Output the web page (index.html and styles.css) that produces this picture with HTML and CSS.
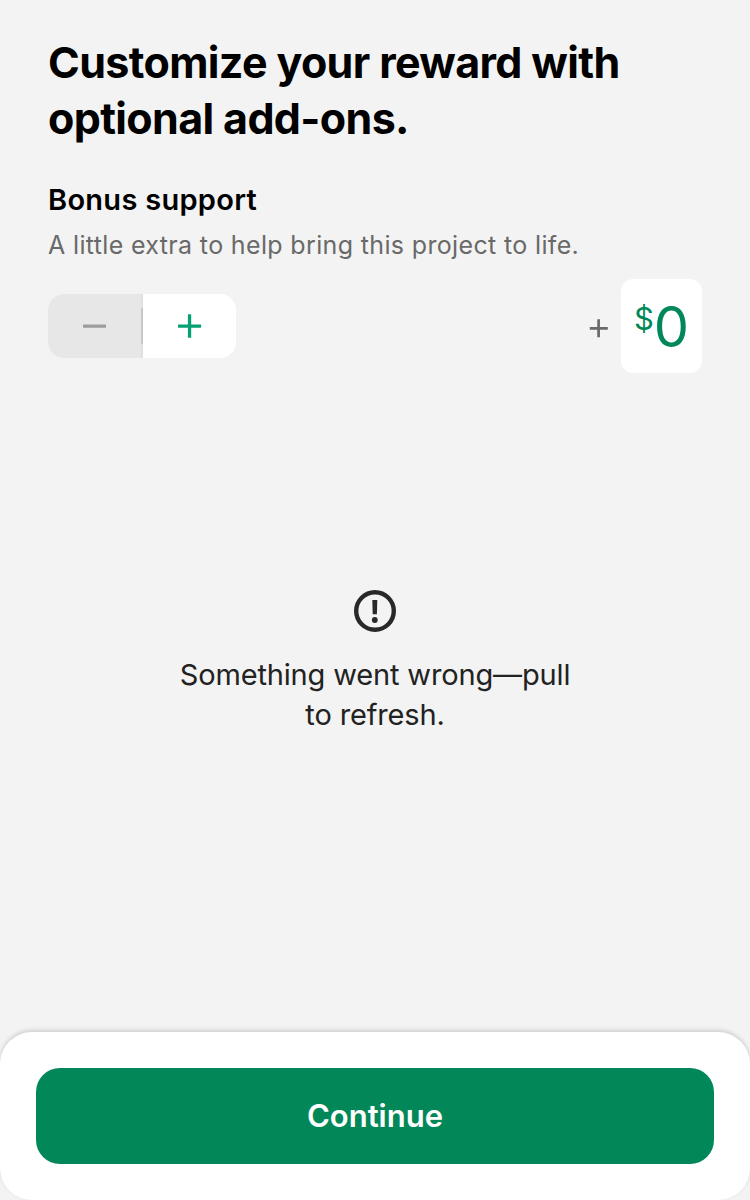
FILE: index.html
```html
<!DOCTYPE html>
<html lang="en">
<head>
<meta charset="utf-8">
<title>Add-ons</title>
<link rel="stylesheet" href="styles.css">
</head>
<body>
<div class="screen">
  <main class="content">
    <h1 class="title">Customize your reward with<br>optional add-ons.</h1>
    <h2 class="subtitle">Bonus support</h2>
    <p class="hint">A little extra to help bring this project to life.</p>
    <div class="bonus">
      <div class="stepper">
        <button class="step step-off" aria-label="Decrease"><svg width="24" height="24" viewBox="0 0 24 24"><rect x="0" y="10.4" width="23" height="3.4" rx=".6" fill="#9b9d9c"/></svg></button>
        <span class="divider"></span>
        <button class="step" aria-label="Increase"><svg width="24" height="24" viewBox="0 0 24 24"><rect x="0" y="10.4" width="23.2" height="3.3" rx=".6" fill="#06a073"/><rect x="9.9" y=".2" width="3.3" height="23.6" rx=".6" fill="#06a073"/></svg></button>
      </div>
      <div class="amount">
        <svg class="plus" width="20" height="20" viewBox="0 0 20 20"><path d="M.8 10.3h18M9.6 1.3v18" stroke="#696969" stroke-width="2.7"/></svg>
        <div class="field"><span class="currency">$</span><span class="value">0</span></div>
      </div>
    </div>
  </main>
  <section class="error">
    <svg width="42" height="42" viewBox="0 0 42 42"><circle cx="21" cy="21" r="18.8" fill="none" stroke="#282828" stroke-width="4.4"/><path d="M18.3 10h5l-.4 14.2h-4.2z" fill="#282828"/><circle cx="20.8" cy="30" r="2.9" fill="#282828"/></svg>
    <p class="message">Something went wrong—pull<br>to refresh.</p>
  </section>
  <footer class="footer"><button class="continue">Continue</button></footer>
</div>
</body>
</html>
```
FILE: styles.css
```css
* { box-sizing: border-box; }
body { margin: 0; background: #f3f3f3; font-family: Inter, "Liberation Sans", sans-serif; color: #000; }
.screen { width: 750px; height: 1200px; display: flex; flex-direction: column; overflow: hidden; }
.content { padding: 34px 48px 0; height: 590px; flex: none; }
.title { margin: 0; font-size: 43px; line-height: 56px; font-weight: 700; letter-spacing: -.64px; white-space: nowrap; }
.subtitle { margin: 35px 0 0; font-size: 29px; line-height: 38px; font-weight: 600; letter-spacing: .28px; }
.hint { margin: 10px 0 0; font-size: 25px; line-height: 32px; letter-spacing: .35px; color: #696969; white-space: nowrap; }
.bonus { margin-top: 18px; display: flex; align-items: center; justify-content: space-between; }
.stepper { display: flex; align-items: center; width: 188px; height: 64px; border-radius: 16px; background: #fff; overflow: hidden; }
.step { width: 93px; height: 64px; padding: 0; border: 0; background: #fff; display: flex; align-items: center; justify-content: center; }
.step-off { background: #e7e7e7; }
.divider { width: 2px; height: 64px; background: linear-gradient(#e0e0e0 14px, #c8c8c8 14px, #c8c8c8 50px, #e0e0e0 50px); }
.amount { display: flex; align-items: center; gap: 12px; }
.plus { margin-top: 4px; }
.field { width: 81px; height: 94px; padding-right: 1px; border-radius: 12px; background: #fff; color: #028858; display: flex; justify-content: center; align-items: flex-start; }
.currency { font-size: 31px; line-height: 40px; margin-top: 20px; }
.value { font-size: 56px; line-height: 64px; margin-top: 16px; letter-spacing: -1px; }
.error { height: 442px; flex: none; text-align: center; color: #222; }
.error svg { display: block; margin: 0 auto; }
.message { margin: 23px 0 0; font-size: 29px; line-height: 40px; letter-spacing: -.15px; white-space: nowrap; }
.footer { height: 168px; flex: none; padding: 36px 36px 0; background: #fff; border-radius: 32px; box-shadow: 0 -2px 4px rgba(0,0,0,.15); }
.continue { display: block; width: 678px; height: 96px; border: 0; border-radius: 24px; background: #028858; color: #fff; font: 600 31px/96px Inter, "Liberation Sans", sans-serif; padding: 0; }
```
